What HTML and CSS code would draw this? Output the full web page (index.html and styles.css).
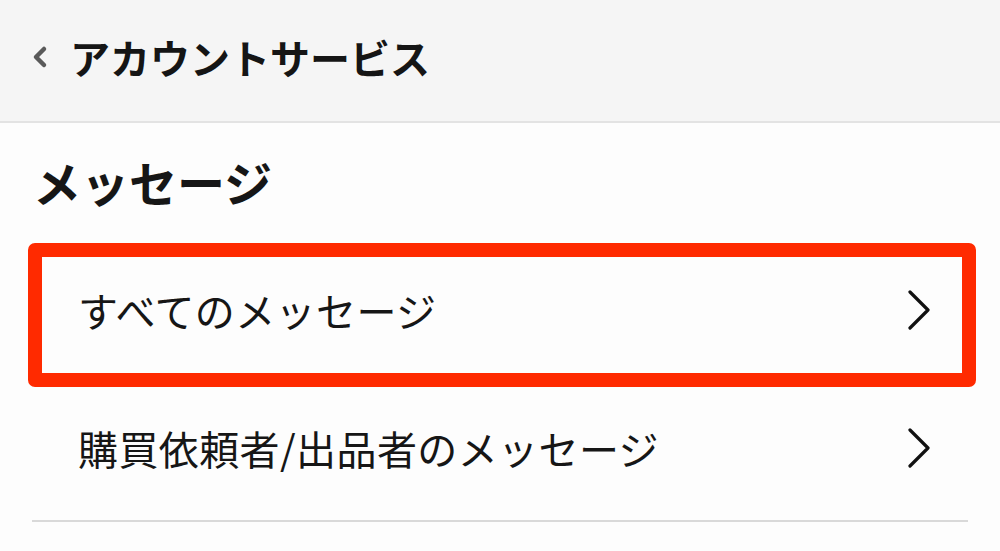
FILE: index.html
```html
<!DOCTYPE html>
<html lang="ja">
<head>
<meta charset="utf-8">
<link rel="stylesheet" href="styles.css">
</head>
<body>
<header class="topbar">
  <svg class="back" width="16" height="24" viewBox="0 0 16 24"><path d="M12 4 L4 12 L12 20" fill="none" stroke="#5a5a5a" stroke-width="4.5" stroke-linecap="round" stroke-linejoin="round"/></svg>
  <h1 class="topbar-title">アカウントサービス</h1>
</header>
<main class="content">
  <h2 class="section-title">メッセージ</h2>
  <ul class="menu">
    <li class="menu-row highlighted">
      <span class="menu-label">すべてのメッセージ</span>
      <svg class="chev" width="24" height="40" viewBox="0 0 24 40"><path d="M3 2 L21 20 L3 38" fill="none" stroke="#111" stroke-width="3.2" stroke-linecap="round" stroke-linejoin="round"/></svg>
    </li>
    <li class="menu-row">
      <span class="menu-label">購買依頼者/出品者のメッセージ</span>
      <svg class="chev" width="24" height="40" viewBox="0 0 24 40"><path d="M3 2 L21 20 L3 38" fill="none" stroke="#111" stroke-width="3.2" stroke-linecap="round" stroke-linejoin="round"/></svg>
    </li>
  </ul>
</main>
</body>
</html>
```
FILE: styles.css
```css
* { box-sizing: border-box; }
html, body { margin: 0; padding: 0; }
body {
  width: 1000px;
  height: 551px;
  overflow: hidden;
  background: #fdfdfd;
  font-family: "Noto Sans CJK JP", "Noto Sans", sans-serif;
  color: #141414;
}
.topbar {
  height: 123px;
  background: #f5f5f5;
  border-bottom: 2px solid #e3e3e3;
  display: flex;
  align-items: center;
  padding-left: 32px;
  padding-bottom: 8px;
  gap: 22px;
}
.back { flex: none; }
.topbar-title {
  margin: 0;
  font-size: 40px;
  font-weight: 700;
  line-height: 1;
  color: #151515;
}
.content {
  padding: 0 32px;
}
.section-title {
  margin: 0;
  padding-top: 27px;
  padding-left: 1px;
  font-size: 48px;
  font-weight: 700;
  line-height: 62px;
  color: #161616;
}
.menu {
  list-style: none;
  margin: 0;
  padding: 0;
  margin-top: 32px;
  border-bottom: 2px solid #d9d9d9;
}
.menu-row {
  position: relative;
  height: 138px;
  display: flex;
  align-items: center;
  justify-content: space-between;
  padding: 0 37px 6px 46px;
}
.menu-label {
  font-size: 40px;
  font-weight: 400;
  line-height: 1;
  letter-spacing: 0.4px;
  color: #161616;
}
.chev { flex: none; }
.highlighted::after {
  content: "";
  position: absolute;
  left: -4px;
  right: -8px;
  top: -1px;
  bottom: -5px;
  border: 14px solid #ff2a00;
  border-radius: 7px;
  pointer-events: none;
}
```
